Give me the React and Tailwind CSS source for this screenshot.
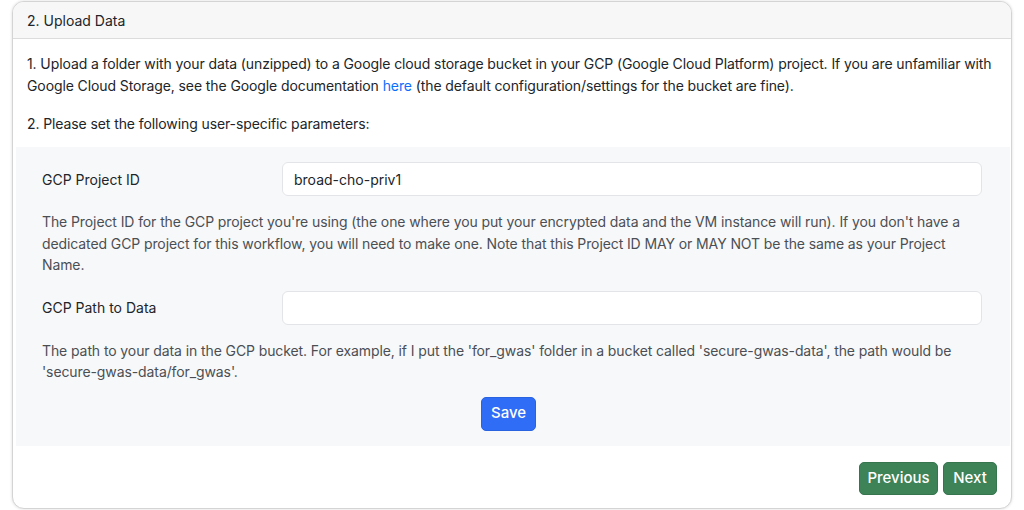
export default function App() {
  return (
    <div className="w-[1024px] h-[510px] bg-white pt-px px-3 overflow-hidden" style={{ fontFamily: "Inter, 'Noto Sans', sans-serif" }}>
      <div className="h-[508px] flex flex-col rounded-[12px] border border-[#d4d4d4] shadow-[0_0_3px_rgba(0,0,0,0.15)] overflow-hidden bg-white">
        <div className="h-[37px] shrink-0 flex items-center px-[14px] bg-[#f7f7f7] border-b border-[#dcdcdc] text-[14px] text-[#212529]">
          2. Upload Data
        </div>
        <div className="flex-1 flex flex-col text-[14px] text-[#212529]">
          <p className="pl-[14px] pr-[10px] pt-[14px] leading-[22px] tracking-[-0.1px]">
            1. Upload a folder with your data (unzipped) to a Google cloud storage bucket in your GCP (Google Cloud Platform) project. If you are unfamiliar with Google Cloud Storage, see the Google documentation <span className="text-[#0d6efd]">here</span> (the default configuration/settings for the bucket are fine).
          </p>
          <p className="px-[14px] pt-[16px] leading-[22px] tracking-[-0.1px]">2. Please set the following user-specific parameters:</p>
          <div className="ml-[3px] mr-px mt-[12px] h-[299px] bg-[#f7f8fa] pl-[26px] pr-[28px] pt-[15px] flex flex-col">
            <div className="flex items-center h-[34px]">
              <div className="w-[240px] shrink-0">GCP Project ID</div>
              <div className="flex-1 h-[34px] bg-white border border-[#e2e4e8] rounded-[6px] flex items-center px-[11px]">broad-cho-priv1</div>
            </div>
            <p className="mt-[15px] leading-[21.5px] text-[#4b4f54] tracking-[-0.1px]">
              The Project ID for the GCP project you're using (the one where you put your encrypted data and the VM instance will run). If you don't have a dedicated GCP project for this workflow, you will need to make one. Note that this Project ID MAY or MAY NOT be the same as your Project Name.
            </p>
            <div className="flex items-center h-[34px] mt-[15px]">
              <div className="w-[240px] shrink-0">GCP Path to Data</div>
              <div className="flex-1 h-[34px] bg-white border border-[#e2e4e8] rounded-[6px]"></div>
            </div>
            <p className="mt-[15px] leading-[21.5px] text-[#4b4f54] tracking-[-0.1px]">
              The path to your data in the GCP bucket. For example, if I put the 'for_gwas' folder in a bucket called 'secure-gwas-data', the path would be 'secure-gwas-data/for_gwas'.
            </p>
            <div className="flex justify-center mt-[14px] pr-[7px]">
              <button className="w-[55px] h-[34px] rounded-[5px] bg-[#2f6df6] border border-[#2a63e0] text-white text-[15px] font-medium">Save</button>
            </div>
          </div>
          <div className="flex justify-end gap-[5px] pr-[14px] mt-[16px]">
            <button className="w-[79px] h-[33px] rounded-[5px] bg-[#3e8258] border border-[#37754f] text-white text-[15px] font-medium">Previous</button>
            <button className="w-[54px] h-[33px] rounded-[5px] bg-[#3e8258] border border-[#37754f] text-white text-[15px] font-medium">Next</button>
          </div>
        </div>
      </div>
    </div>
  );
}
